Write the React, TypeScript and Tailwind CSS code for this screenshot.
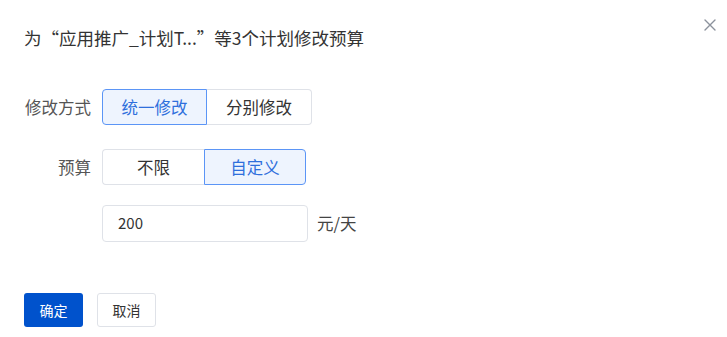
import React from "react";

export default function App() {
  const font = { fontFamily: '"Noto Sans CJK SC", "Noto Sans", sans-serif' };
  return (
    <div className="w-[727px] h-[337px] bg-white relative overflow-hidden" style={font}>
      <button className="absolute left-[704px] top-[19px] w-[12px] h-[12px] flex items-center justify-center">
        <svg width="12" height="12" viewBox="0 0 12 12">
          <path d="M1 1 L11 11 M11 1 L1 11" stroke="#8c929c" strokeWidth="1.4" strokeLinecap="round" />
        </svg>
      </button>
      <div className="pl-[24px] pt-[28px] flex flex-col">
        <div className="text-[17.5px] leading-[20px] text-[#333333] h-[20px] whitespace-nowrap">为“应用推广_计划T...”等3个计划修改预算</div>
        <div className="mt-[41px] flex items-center h-[36px]">
          <div className="w-[67px] text-right text-[16.5px] text-[#555555] whitespace-nowrap">修改方式</div>
          <div className="ml-[11px] flex h-[36px]">
            <button className="w-[105px] h-[36px] rounded-l-[4px] border border-[#5b95f6] bg-[#eef4fe] text-[#2f6fdc] text-[16.5px]">统一修改</button>
            <button className="w-[105px] h-[36px] rounded-r-[4px] border border-l-0 border-[#dfe2e8] bg-white text-[#333333] text-[16.5px]">分别修改</button>
          </div>
        </div>
        <div className="mt-[24px] flex items-center h-[36px]">
          <div className="w-[67px] text-right text-[16.5px] text-[#555555]">预算</div>
          <div className="ml-[11px] flex h-[36px]">
            <button className="w-[102px] h-[36px] rounded-l-[4px] border border-r-0 border-[#dfe2e8] bg-white text-[#333333] text-[16.5px]">不限</button>
            <button className="w-[102px] h-[36px] rounded-r-[4px] border border-[#5b95f6] bg-[#eef4fe] text-[#2f6fdc] text-[16.5px]">自定义</button>
          </div>
        </div>
        <div className="mt-[20px] flex items-center h-[37px]">
          <div className="w-[67px]" />
          <div className="ml-[11px] w-[206px] h-[37px] rounded-[4px] border border-[#dfe2e8] flex items-center pl-[15px] text-[15px] text-[#333333]">200</div>
          <div className="ml-[9px] text-[16.5px] text-[#444444]">元/天</div>
        </div>
        <div className="mt-[51px] flex items-center gap-[14px]">
          <button className="w-[59px] h-[34px] rounded-[3px] bg-[#0052cc] text-white text-[14px]">确定</button>
          <button className="w-[59px] h-[34px] rounded-[3px] border border-[#dfe2e8] bg-white text-[#333333] text-[14px]">取消</button>
        </div>
      </div>
    </div>
  );
}
